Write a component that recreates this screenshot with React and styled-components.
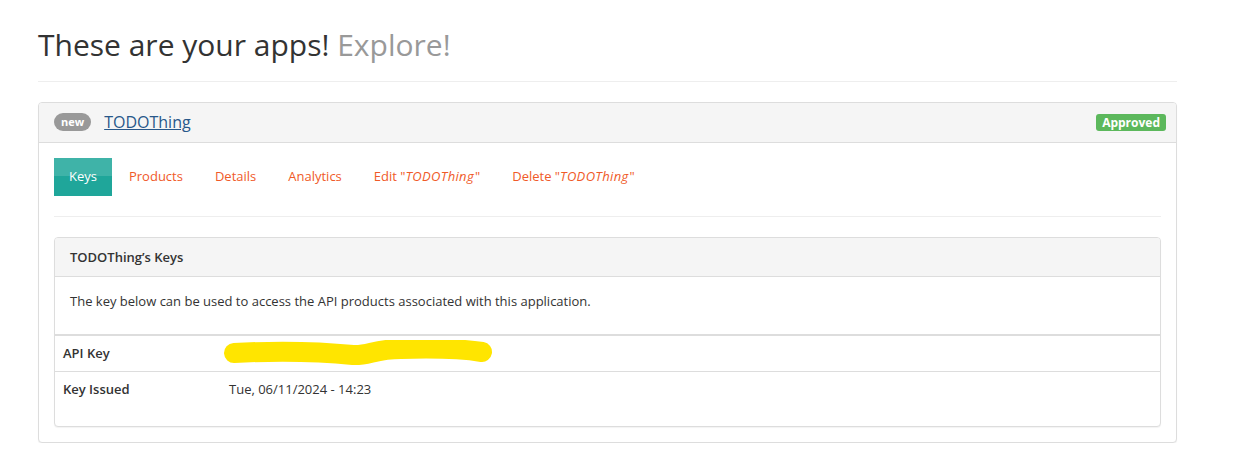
import React from 'react';
import styled, { createGlobalStyle } from 'styled-components';

const GlobalStyle = createGlobalStyle`
    body {
        margin: 0;
        background: #fff;
        font-family: "Open Sans", "Liberation Sans", sans-serif;
        font-size: 13px;
        line-height: 1.42857;
        color: #333;
    }
    * { box-sizing: border-box; }
`

const Page = styled.div`
    width: 1139px;
    margin-left: 38px;
    padding-top: 28px;
`

const Title = styled.h1`
    margin: 0;
    font-size: 30px;
    font-weight: 400;
    line-height: 33px;
    color: #333;
`

const Muted = styled.span`
    color: #999;
`

const Rule = styled.hr`
    border: 0;
    border-top: 1px solid #eee;
    margin: ${p => p.$top}px 0 ${p => p.$bottom}px;
`

const Panel = styled.div`
    border: 1px solid #ddd;
    border-radius: 4px;
    background: #fff;
    box-shadow: 0 1px 1px rgba(0, 0, 0, 0.05);
`

const PanelHeading = styled.div`
    display: flex;
    align-items: center;
    gap: 13px;
    background: #f5f5f5;
    border-bottom: 1px solid #ddd;
    border-radius: 3px 3px 0 0;
    padding: ${p => p.$pad};
    font-weight: ${p => p.$bold ? 600 : 400};
`

const PanelBody = styled.div`
    padding: 15px;
`

const Badge = styled.span`
    display: inline-block;
    background: #999;
    color: #fff;
    font-size: 11px;
    font-weight: 700;
    line-height: 18px;
    height: 18px;
    padding: 0 7px;
    border-radius: 9px;
`

const AppLink = styled.a`
    color: #28588a;
    font-size: 16px;
    text-decoration: underline;
    line-height: 20px;
`

const Status = styled.span`
    margin-left: auto;
    background: #5cb85c;
    color: #fff;
    font-size: 12px;
    font-weight: 700;
    line-height: 17px;
    padding: 0 6px;
    border-radius: 3px;
`

const Tabs = styled.ul`
    display: flex;
    list-style: none;
    margin: 0;
    padding: 0;
    gap: 2px;
`

const Tab = styled.li`
    padding: 9px 15px 10px;
    line-height: 19px;
    font-size: 13px;
    color: ${p => p.$active ? '#fff' : '#f05a28'};
    background: ${p => p.$active ? 'linear-gradient(#3fb3a8 0, #3fb3a8 47%, #1fa69a 47%, #1fa69a 100%)' : 'transparent'};
    cursor: pointer;

    em {
        font-style: italic;
        letter-spacing: 0.35px;
        padding-right: 1px;
    }
`

const Intro = styled.p`
    margin: 0;
    padding: 15px 15px 24px;
`

const Table = styled.table`
    width: 100%;
    border-collapse: collapse;
    margin-bottom: 20px;
`

const Row = styled.tr`
    border-top: ${p => p.$first ? '2px' : '1px'} solid #ddd;
`

const Label = styled.th`
    width: 166px;
    text-align: left;
    font-weight: 600;
    padding: 8px;
    height: 35px;
`

const Value = styled.td`
    padding: 8px;
`

const Scribble = styled.svg`
    display: block;
    margin: -4px 0 -4px -6px;
`

function Highlight() {
    return (
        <Scribble width="272" height="26" viewBox="0 0 272 26">
            <path
                d="M11 13 C50 11 90 11 130 15 C145 16 152 9 178 9 C212 8 240 9 259 12"
                fill="none"
                stroke="#ffe500"
                strokeWidth="20"
                strokeLinecap="round"
            />
        </Scribble>
    )
}

const tabs = [
    { text: 'Keys', active: true },
    { text: 'Products' },
    { text: 'Details' },
    { text: 'Analytics' },
    { text: 'Edit "', name: 'TODOThing' },
    { text: 'Delete "', name: 'TODOThing' },
]

export default function App() {
    return (
        <Page>
            <GlobalStyle />
            <Title>These are your apps! <Muted>Explore!</Muted></Title>
            <Rule $top={20} $bottom={20} />
            <Panel>
                <PanelHeading $pad="9px 10px 10px 15px">
                    <Badge>new</Badge>
                    <AppLink href="#">TODOThing</AppLink>
                    <Status>Approved</Status>
                </PanelHeading>
                <PanelBody>
                    <Tabs>
                        {tabs.map(t => (
                            <Tab key={t.text} $active={t.active}>
                                {t.text}
                                {t.name && <><em>{t.name}</em>"</>}
                            </Tab>
                        ))}
                    </Tabs>
                    <Rule $top={20} $bottom={20} />
                    <Panel>
                        <PanelHeading $pad="10px 15px 9px" $bold>TODOThing’s Keys</PanelHeading>
                        <Intro>The key below can be used to access the API products associated with this application.</Intro>
                        <Table>
                            <tbody>
                                <Row $first>
                                    <Label>API Key</Label>
                                    <Value><Highlight /></Value>
                                </Row>
                                <Row>
                                    <Label>Key Issued</Label>
                                    <Value>Tue, 06/11/2024 - 14:23</Value>
                                </Row>
                            </tbody>
                        </Table>
                    </Panel>
                </PanelBody>
            </Panel>
        </Page>
    )
}
